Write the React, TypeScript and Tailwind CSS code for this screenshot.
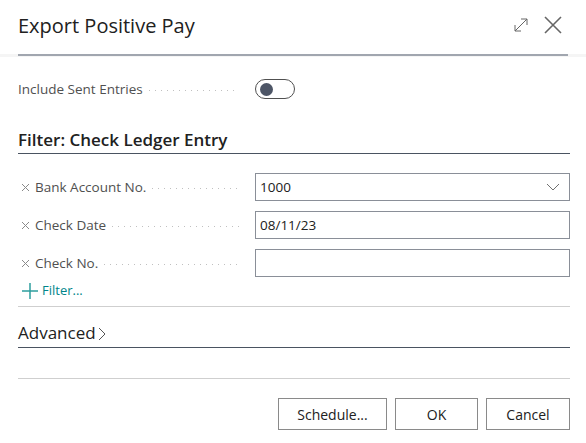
import React from "react";

const font = { fontFamily: '"Segoe UI", "Open Sans", "Noto Sans", sans-serif' };

function Dots() {
  return (
    <div className="flex-1 mx-[6px] h-px self-center mt-[3px] bg-[linear-gradient(to_right,#c0c0c0_1px,transparent_1px)] bg-[length:6px_1px] bg-repeat-x" />
  );
}

function XMark() {
  return (
    <svg width="9" height="9" viewBox="0 0 9 9" className="mr-[5px] ml-[3px]">
      <path d="M1 1L8 8M8 1L1 8" stroke="#8a8a8a" strokeWidth="1" />
    </svg>
  );
}

function FilterRow({ label, value, dropdown }: { label: string; value: string; dropdown?: boolean }) {
  return (
    <div className="flex h-[28px] items-center">
      <div className="w-[237px] pr-[10px] flex items-center h-full">
        <XMark />
        <span className="text-[13.5px] text-[#505050] whitespace-nowrap">{label}</span>
        <Dots />
      </div>
      <div className="flex-1 h-full border border-[#8a8f98] flex items-center px-[4px] justify-between">
        <span className="text-[13.5px] text-[#212121]">{value}</span>
        {dropdown && (
          <svg width="14" height="8" viewBox="0 0 14 8" className="mr-[5px]">
            <path d="M1 1L7 7L13 1" stroke="#707070" strokeWidth="1" fill="none" />
          </svg>
        )}
      </div>
    </div>
  );
}

export default function App() {
  return (
    <div className="w-[586px] h-[443px] bg-white relative overflow-hidden" style={font}>
      <div className="h-[54px] px-[18px] flex items-center justify-between">
        <div className="text-[20px] text-[#212121] mt-[-3px]">Export Positive Pay</div>
        <div className="flex items-center gap-[14px] mr-[6px] mt-[-4px]">
          <svg width="18" height="18" viewBox="0 0 18 18">
            <path d="M3 15L15 3M9 3H15V9M3 9V15H9" stroke="#666" strokeWidth="1" fill="none" />
          </svg>
          <svg width="18" height="18" viewBox="0 0 18 18">
            <path d="M1 1L17 17M17 1L1 17" stroke="#666" strokeWidth="1.6" fill="none" />
          </svg>
        </div>
      </div>
      <div className="h-[3px] bg-[#f5f5f5] flex items-start">
        <div className="mx-[18px] h-[2px] w-full bg-[#a1a6af]" />
      </div>
      <div className="px-[16px]">
        <div className="mt-[18px] flex h-[28px] items-center">
          <div className="w-[239px] pr-[10px] flex items-center h-full pl-[2px]">
            <span className="text-[13.5px] text-[#505050] whitespace-nowrap">Include Sent Entries</span>
            <Dots />
          </div>
          <div className="w-[40px] h-[20px] rounded-full border border-[#505050] flex items-center px-[4px]">
            <div className="w-[13px] h-[13px] rounded-full bg-[#4d5566]" />
          </div>
        </div>
        <div className="mt-[26px] ml-[2px] h-[25px] border-b border-[#4a5361] text-[17px] font-semibold text-[#212121] leading-[22px]">
          Filter: Check Ledger Entry
        </div>
        <div className="mt-[19px] flex flex-col gap-[10px] pl-[2px]">
          <FilterRow label="Bank Account No." value="1000" dropdown />
          <FilterRow label="Check Date" value="08/11/23" />
          <FilterRow label="Check No." value="" />
        </div>
        <div className="mt-[4px] h-[20px] flex items-center pl-[6px] text-[#00858a]">
          <svg width="16" height="16" viewBox="0 0 16 16" className="mr-[4px]">
            <path d="M8 0V16M0 8H16" stroke="#2e9e9e" strokeWidth="1.5" />
          </svg>
          <span className="text-[13px]">Filter...</span>
        </div>
        <div className="mt-[5px] ml-[2px] border-t border-[#cfcfcf]" />
        <div className="mt-[14px] ml-[2px] h-[27px] border-b border-[#4a5361] flex items-start">
          <span className="text-[17px] text-[#212121] leading-[24px]">Advanced</span>
          <svg width="8" height="14" viewBox="0 0 8 14" className="ml-[2px] mt-[6px]">
            <path d="M1 1L7 7L1 13" stroke="#555" strokeWidth="1" fill="none" />
          </svg>
        </div>
        <div className="mt-[30px] ml-[2px] border-t border-[#cfcfcf]" />
        <div className="mt-[19px] flex justify-end gap-[8px]">
          <button className="w-[109px] h-[32px] border border-[#8a8a8a] text-[14px] text-[#212121] bg-white">Schedule...</button>
          <button className="w-[83px] h-[32px] border border-[#8a8a8a] text-[14px] text-[#212121] bg-white">OK</button>
          <button className="w-[84px] h-[32px] border border-[#8a8a8a] text-[14px] text-[#212121] bg-white">Cancel</button>
        </div>
      </div>
    </div>
  );
}
